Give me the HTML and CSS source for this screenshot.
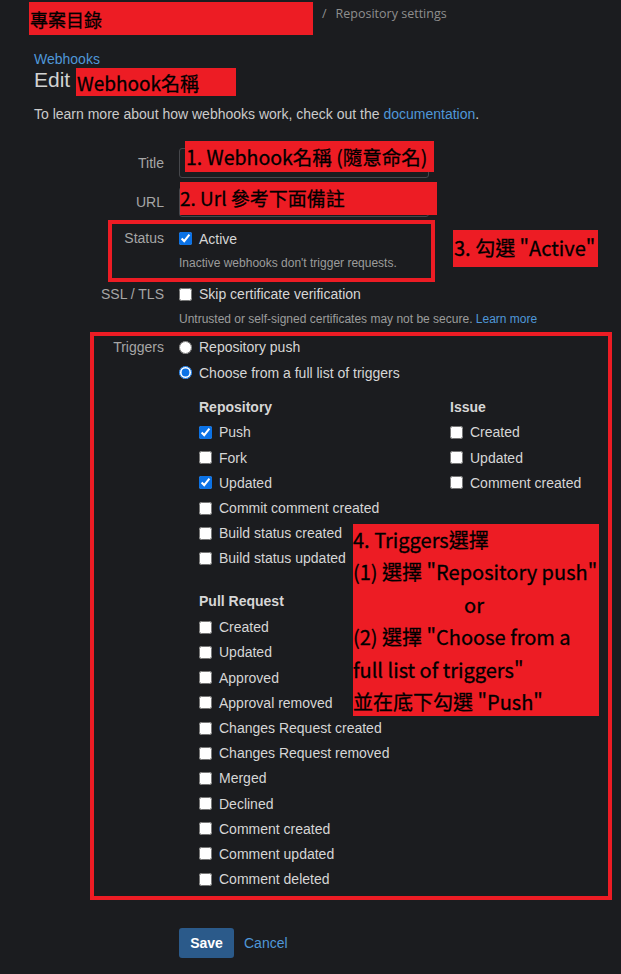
FILE: index.html
```html
<!DOCTYPE html>
<html lang="zh-Hant">
<head>
<meta charset="utf-8">
<title>Edit webhook</title>
<link rel="stylesheet" href="styles.css">
</head>
<body>
<div class="page">
  <header class="crumbs">
    <span class="crumb-redact">專案目錄</span>
    <span class="crumb-sep">/</span>
    <span class="crumb-current">Repository settings</span>
  </header>

  <main class="content">
    <a class="back-link" href="#">Webhooks</a>
    <h1 class="page-title">Edit</h1>
    <p class="intro">To learn more about how webhooks work, check out the <a href="#">documentation</a>.</p>

    <form class="hook-form">
      <div class="field field-text">
        <label class="field-label">Title</label>
        <div class="field-control"><input class="text-input" type="text"></div>
      </div>
      <div class="field field-text">
        <label class="field-label">URL</label>
        <div class="field-control"><input class="text-input" type="text"></div>
      </div>
      <div class="field field-status">
        <span class="field-label">Status</span>
        <div class="field-control">
          <label class="check"><input type="checkbox" checked><span>Active</span></label>
          <div class="help">Inactive webhooks don't trigger requests.</div>
        </div>
      </div>
      <div class="field field-ssl">
        <span class="field-label">SSL / TLS</span>
        <div class="field-control">
          <label class="check"><input type="checkbox"><span>Skip certificate verification</span></label>
          <div class="help">Untrusted or self-signed certificates may not be secure. <a href="#">Learn more</a></div>
        </div>
      </div>
      <div class="field field-triggers">
        <span class="field-label">Triggers</span>
        <div class="field-control">
          <label class="check"><input type="radio" name="trig"><span>Repository push</span></label>
          <label class="check"><input type="radio" name="trig" checked><span>Choose from a full list of triggers</span></label>
          <div class="groups">
            <div class="group">
              <div class="group-title">Repository</div>
              <label class="check"><input type="checkbox" checked><span>Push</span></label>
              <label class="check"><input type="checkbox"><span>Fork</span></label>
              <label class="check"><input type="checkbox" checked><span>Updated</span></label>
              <label class="check"><input type="checkbox"><span>Commit comment created</span></label>
              <label class="check"><input type="checkbox"><span>Build status created</span></label>
              <label class="check"><input type="checkbox"><span>Build status updated</span></label>
            </div>
            <div class="group">
              <div class="group-title">Issue</div>
              <label class="check"><input type="checkbox"><span>Created</span></label>
              <label class="check"><input type="checkbox"><span>Updated</span></label>
              <label class="check"><input type="checkbox"><span>Comment created</span></label>
            </div>
            <div class="group group-pr">
              <div class="group-title">Pull Request</div>
              <label class="check"><input type="checkbox"><span>Created</span></label>
              <label class="check"><input type="checkbox"><span>Updated</span></label>
              <label class="check"><input type="checkbox"><span>Approved</span></label>
              <label class="check"><input type="checkbox"><span>Approval removed</span></label>
              <label class="check"><input type="checkbox"><span>Changes Request created</span></label>
              <label class="check"><input type="checkbox"><span>Changes Request removed</span></label>
              <label class="check"><input type="checkbox"><span>Merged</span></label>
              <label class="check"><input type="checkbox"><span>Declined</span></label>
              <label class="check"><input type="checkbox"><span>Comment created</span></label>
              <label class="check"><input type="checkbox"><span>Comment updated</span></label>
              <label class="check"><input type="checkbox"><span>Comment deleted</span></label>
            </div>
          </div>
        </div>
      </div>
      <div class="form-actions">
        <button class="btn-save" type="button">Save</button>
        <a class="cancel" href="#">Cancel</a>
      </div>
    </form>
  </main>

  <div class="redact redact-name">Webhook名稱</div>
  <div class="redact redact-title">1. Webhook名稱 (隨意命名)</div>
  <div class="redact redact-url">2. Url 參考下面備註</div>
  <div class="outline outline-status"></div>
  <div class="redact note-active">3. 勾選 "Active"</div>
  <div class="outline outline-triggers"></div>
  <div class="redact note-triggers">
    <div>4. Triggers選擇</div>
    <div>(1) 選擇 "Repository push"</div>
    <div class="note-or">or</div>
    <div>(2) 選擇 "Choose from a</div>
    <div>full list of triggers"</div>
    <div>並在底下勾選 "Push"</div>
  </div>
</div>
</body>
</html>
```

FILE: styles.css
```css
:root {
  --row: 25.2px;
  --red: #ed1c24;
}

html, body {
  margin: 0;
  padding: 0;
}

body {
  background: #1b1c1f;
  color: #d4d4d4;
  font-family: "Liberation Sans", Arial, sans-serif;
  font-size: 14px;
}

a {
  color: #4f97d8;
  text-decoration: none;
}

.page {
  position: relative;
  width: 621px;
  min-height: 974px;
}

/* breadcrumbs */
.crumbs {
  display: flex;
  align-items: flex-start;
  padding: 2px 0 0 29px;
  height: 33px;
}

.crumb-redact {
  width: 284px;
  height: 33px;
  background: var(--red);
  color: #000;
  font-family: "Noto Sans CJK TC", sans-serif;
  font-size: 18px;
  line-height: 34px;
  padding-left: 1px;
  box-sizing: border-box;
  -webkit-text-stroke: 0.3px #000;
}

.crumb-sep,
.crumb-current {
  color: #8e8e8e;
  font-family: "Open Sans", sans-serif;
  font-size: 12.5px;
  line-height: 23px;
}

.crumb-sep {
  margin-left: 9px;
}

.crumb-current {
  margin-left: 9px;
}

/* content */
.content {
  padding: 16px 0 0 34px;
}

.back-link {
  display: block;
  font-size: 14px;
  line-height: 16px;
  color: #4f97d8;
}

.page-title {
  margin: 0;
  font-weight: normal;
  font-size: 21px;
  line-height: 26px;
  color: #d2d2d2;
}

.intro {
  margin: 11px 0 0;
  font-size: 14px;
  line-height: 20px;
  color: #cbcbcb;
}

/* form */
.hook-form {
  margin-top: 24px;
}

.field {
  display: grid;
  grid-template-columns: 130px 1fr;
  column-gap: 15px;
}

.field-label {
  text-align: right;
  color: #a6a6a6;
  line-height: var(--row);
}

.field-text {
  margin-bottom: 9px;
}

.field-text .field-label {
  line-height: 30px;
}

.text-input {
  display: block;
  width: 250px;
  height: 30px;
  box-sizing: border-box;
  background: transparent;
  border: 1px solid #46474b;
  border-radius: 3px;
  margin: 0;
}

.field-status {
  margin-bottom: 5.5px;
}

.field-ssl {
  margin-bottom: 2.5px;
}

.check {
  display: flex;
  align-items: center;
  gap: 7px;
  height: var(--row);
  color: #d6d6d6;
  white-space: nowrap;
}

.check input {
  margin: 0;
  width: 13px;
  height: 13px;
  accent-color: #0b72e6;
  flex: none;
}

.help {
  font-size: 12px;
  line-height: var(--row);
  color: #9c9c9c;
  white-space: nowrap;
}

.help a {
  color: #4f97d8;
}

.groups {
  display: grid;
  grid-template-columns: 251px auto;
  margin: 9.5px 0 0 20px;
}

.group-title {
  font-weight: bold;
  line-height: var(--row);
  color: #d6d6d6;
}

.group-pr {
  grid-column: 1;
  margin-top: 18.5px;
}

.form-actions {
  display: flex;
  align-items: center;
  gap: 10px;
  margin: 36px 0 0 145px;
}

.btn-save {
  width: 55px;
  height: 30px;
  border: none;
  border-radius: 3px;
  background: #2b5a8a;
  color: #fff;
  font-family: "Liberation Sans", Arial, sans-serif;
  font-weight: bold;
  font-size: 14px;
  padding: 0;
}

.cancel {
  font-size: 14px;
  color: #4f97d8;
}

/* annotations (overlays) */
.redact {
  position: absolute;
  background: var(--red);
  color: #000;
  font-family: "Noto Sans CJK TC", sans-serif;
  box-sizing: border-box;
  white-space: nowrap;
  -webkit-text-stroke: 0.3px #000;
}

.redact-name {
  left: 76px;
  top: 68px;
  width: 160px;
  height: 28px;
  font-size: 19px;
  line-height: 30px;
  padding-left: 1px;
}

.redact-title {
  left: 185px;
  top: 141px;
  width: 249px;
  height: 31px;
  font-size: 19.5px;
  line-height: 31px;
  padding-left: 1px;
}

.redact-url {
  left: 180px;
  top: 182px;
  width: 257px;
  height: 33px;
  font-size: 19px;
  line-height: 32px;
}

.outline {
  position: absolute;
  border: 4px solid var(--red);
  box-sizing: border-box;
}

.outline-status {
  left: 108px;
  top: 220px;
  width: 327px;
  height: 62px;
}

.note-active {
  left: 453px;
  top: 230px;
  width: 145px;
  height: 37px;
  font-size: 20px;
  line-height: 36px;
  padding-left: 1px;
}

.outline-triggers {
  left: 90px;
  top: 332px;
  width: 522px;
  height: 568px;
}

.note-triggers {
  left: 353px;
  top: 524px;
  width: 246px;
  height: 192px;
  font-size: 20px;
  line-height: 32.4px;
}

.note-or {
  text-align: center;
  padding-right: 4px;
}
```
